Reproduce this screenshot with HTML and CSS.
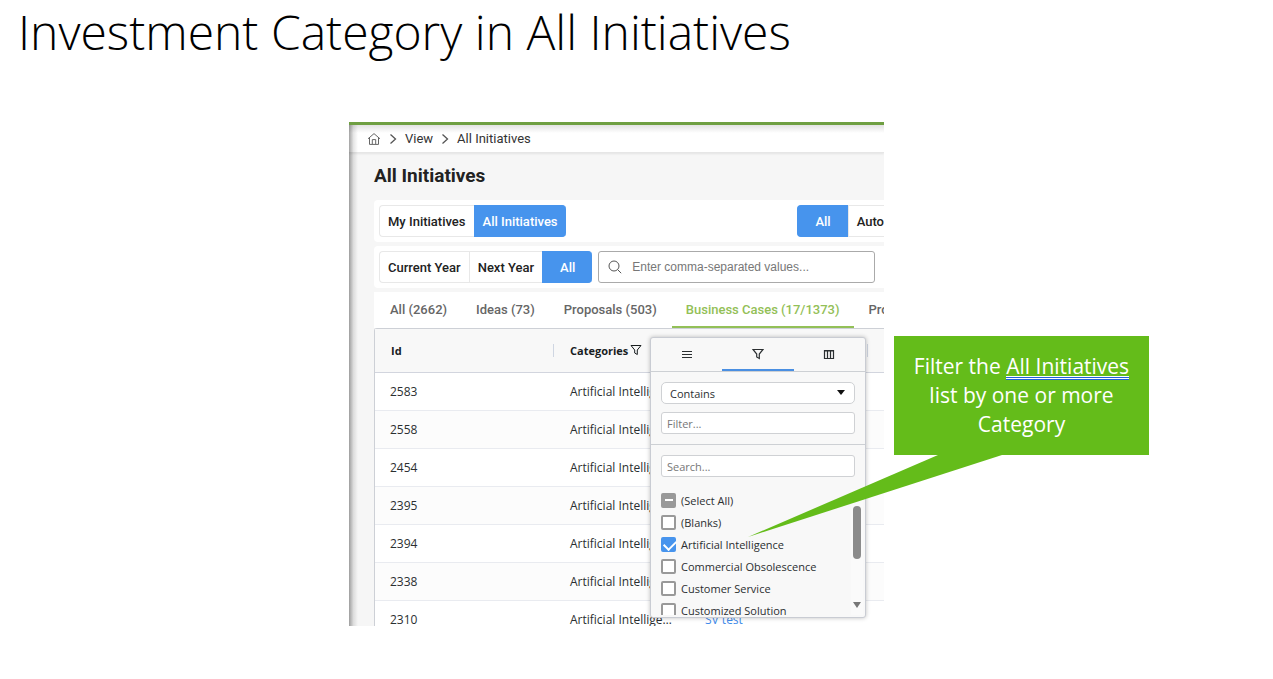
FILE: index.html
```html
<!DOCTYPE html>
<html lang="en">
<head>
<meta charset="utf-8">
<title>Investment Category in All Initiatives</title>
<link rel="stylesheet" href="styles.css">
</head>
<body>
<h1 class="slide-title">Investment Category in All Initiatives</h1>
<main class="slide">
  <section class="app">
    <nav class="crumbs" aria-label="Breadcrumb">
      <svg class="home" viewBox="0 0 14 14" aria-hidden="true"><path d="M1 6.8 7 1.6l6 5.2M2.5 6v6.4h9V6M5.3 12.2V7.6h3.4v4.6"/></svg>
      <svg class="chev" viewBox="0 0 8 12" aria-hidden="true"><path d="m1.5 1.5 5 4.5-5 4.5"/></svg>
      <a href="#">View</a>
      <svg class="chev" viewBox="0 0 8 12" aria-hidden="true"><path d="m1.5 1.5 5 4.5-5 4.5"/></svg>
      <a href="#">All Initiatives</a>
    </nav>
    <div class="content">
      <h2 class="heading">All Initiatives</h2>
      <div class="toolbar spread">
        <div class="group">
          <button class="btn">My Initiatives</button><button class="btn on">All Initiatives</button>
        </div>
        <div class="group modes">
          <button class="btn on">All</button><button class="btn">Auto</button>
        </div>
      </div>
      <div class="toolbar">
        <div class="group">
          <button class="btn">Current Year</button><button class="btn">Next Year</button><button class="btn on all">All</button>
        </div>
        <label class="search">
          <svg viewBox="0 0 14 14" aria-hidden="true"><circle cx="6" cy="6" r="5"/><path d="m9.6 9.6 3.6 3.6"/></svg>
          <input type="text" aria-label="Search values" placeholder="Enter comma-separated values...">
        </label>
      </div>
      <div class="tabs">
        <button class="tab">All (2662)</button>
        <button class="tab">Ideas (73)</button>
        <button class="tab">Proposals (503)</button>
        <button class="tab current">Business Cases (17/1373)</button>
        <button class="tab">Pro</button>
      </div>
      <div class="grid">
        <table>
          <colgroup><col class="c-id"><col class="c-cat"><col class="c-name"><col class="c-rest"></colgroup>
          <thead>
            <tr><th class="sep">Id</th><th class="cat">Categories<svg class="funnel" viewBox="0 0 12 12" aria-hidden="true"><path d="M1 1.5h10L7.3 6v4.5L4.7 9V6z"/></svg></th><th class="sep"></th><th></th></tr>
          </thead>
          <tbody>
            <tr><td>2583</td><td>Artificial Intelligence</td><td></td><td></td></tr>
            <tr><td>2558</td><td>Artificial Intelligence</td><td></td><td></td></tr>
            <tr><td>2454</td><td>Artificial Intelligence</td><td></td><td></td></tr>
            <tr><td>2395</td><td>Artificial Intelligence</td><td></td><td></td></tr>
            <tr><td>2394</td><td>Artificial Intelligence</td><td></td><td></td></tr>
            <tr><td>2338</td><td>Artificial Intelligence</td><td></td><td></td></tr>
            <tr><td>2310</td><td>Artificial Intelligence</td><td><a href="#">SV test</a></td><td></td></tr>
          </tbody>
        </table>
        <div class="popup">
          <div class="ptabs">
            <button class="ptab" aria-label="Menu"><svg viewBox="0 0 12 12"><path d="M1 3.5h10M1 6.5h10M1 9.5h10"/></svg></button>
            <button class="ptab current" aria-label="Filter"><svg viewBox="0 0 12 12"><path d="M1 1.5h10L7.3 6v4.5L4.7 9V6z"/></svg></button>
            <button class="ptab" aria-label="Columns"><svg viewBox="0 0 12 12"><path d="M1.5 2.5h9v8h-9zM4.5 2.5v8M7.5 2.5v8M1 3h10"/></svg></button>
          </div>
          <div class="fields">
            <div class="pick">
              <select aria-label="Condition"><option>Contains</option></select>
              <svg viewBox="0 0 8 5" aria-hidden="true"><path d="M0 0h8L4 5z"/></svg>
            </div>
            <input class="field" type="text" aria-label="Filter" placeholder="Filter...">
          </div>
          <div class="values">
            <input class="field" type="text" aria-label="Search" placeholder="Search...">
            <div class="scroller">
              <div class="list">
                <label><input type="checkbox" class="some">(Select All)</label>
                <label><input type="checkbox">(Blanks)</label>
                <label><input type="checkbox" checked>Artificial Intelligence</label>
                <label><input type="checkbox">Commercial Obsolescence</label>
                <label><input type="checkbox">Customer Service</label>
                <label><input type="checkbox">Customized Solution</label>
              </div>
              <div class="bar"><span class="thumb"></span><svg viewBox="0 0 8 6" aria-hidden="true"><path d="M0 0h8L4 6z"/></svg></div>
            </div>
          </div>
        </div>
      </div>
    </div>
  </section>
  <aside class="callout">
    <p>Filter the <span class="marked">All Initiatives</span> list by one or more Category</p>
    <svg class="pointer" viewBox="0 0 254 83" aria-hidden="true"><path d="M190 0h64L0 82z"/></svg>
  </aside>
</main>
</body>
</html>
```
FILE: styles.css
```css
* { box-sizing: border-box; }
body { margin: 0; background: #fff; color: #000; font-family: "Open Sans", "Noto Sans", sans-serif; overflow-x: hidden; }
button, input, select { font: inherit; color: inherit; }
button { border: 0; background: none; padding: 0; }
a { color: inherit; text-decoration: none; }
svg { display: block; fill: none; stroke: currentColor; flex: none; }

.slide-title { margin: 0; padding: 0 18px; font-size: 48px; line-height: 64px; font-weight: 300; white-space: nowrap; }
.slide { display: grid; grid-template-columns: 349fr 535fr 389fr; align-items: start; padding-top: 58px; }

.app { grid-column: 2; min-width: 0; position: relative; overflow: hidden; background: #f6f6f6; border-top: 3px solid #6f9f42; font-family: Roboto, sans-serif; font-size: 13px; color: #222; }
.app::after { content: ""; position: absolute; inset: 0 auto 0 0; width: 9px; background: linear-gradient(90deg, rgba(0,0,0,.36), rgba(0,0,0,.1) 50%, transparent); }
.crumbs { display: flex; align-items: center; height: 28px; padding: 0 18px; background: linear-gradient(#e2e2e2, #fff 8px); border-bottom: 1px solid #e6e6e6; box-shadow: 0 1px 2px rgba(0,0,0,.08); color: #333; }
.home { width: 14px; height: 14px; margin-right: 8px; color: #666; }
.chev { width: 8px; height: 12px; margin-right: 8px; stroke-width: 1.3; color: #555; }
.crumbs a { margin-right: 8px; }
.content { padding-left: 25px; }
.heading { margin: 0; padding: 11px 0 12px; font-size: 19px; line-height: 24px; font-weight: 700; }

.toolbar { display: flex; gap: 6px; margin-bottom: 4px; padding: 5px 9px 5px 5px; background: #fff; border-radius: 4px 0 0 4px; }
.spread { justify-content: space-between; padding-right: 0; }
.group { display: flex; flex: none; }
.btn { height: 32px; padding: 0 8px; border: 1px solid #e8e8e8; border-right-width: 0; background: #fff; font-weight: 500; white-space: nowrap; }
.btn:first-child { border-radius: 4px 0 0 4px; }
.btn:last-child { border-radius: 0 4px 4px 0; }
.btn.on { background: #4794ed; border-color: #4794ed; color: #fff; }
.all, .modes .on { padding: 0 17px; }
.modes .btn:last-child { padding-right: 0; border-radius: 0; }
.search { display: flex; flex: 1; align-items: center; gap: 10px; min-width: 0; padding: 0 9px; border: 1px solid #aaa; border-radius: 3px; }
.search svg { width: 14px; height: 14px; color: #555; }
.search input { flex: 1; min-width: 0; padding: 0; border: 0; outline: 0; background: none; font-family: "Liberation Sans", sans-serif; font-size: 12px; }
input::placeholder { color: #777; opacity: 1; }

.tabs { display: flex; gap: 1px; padding-left: 2px; background: #fff; }
.tab { flex: none; height: 36px; padding: 0 14px; border-bottom: 2px solid transparent; font-weight: 500; color: #666; white-space: nowrap; }
.tab.current { color: #93c057; border-color: #93c057; }

.grid { position: relative; margin-bottom: -14px; border: 1px solid #cdd0d6; border-right: 0; border-radius: 3px 0 0; background: #fff; font-family: "Open Sans", "Noto Sans", sans-serif; font-size: 12px; }
table { width: 100%; table-layout: fixed; border-collapse: separate; border-spacing: 0; }
.c-id { width: 179px; }
.c-cat { width: 135px; }
.c-name { width: 179px; }
th { position: relative; height: 44px; padding: 0 16px; background: #f8f8f8; border-bottom: 1px solid #d2d5de; text-align: left; font-size: 11px; font-weight: 700; color: #181d1f; white-space: nowrap; }
.sep::after { content: ""; position: absolute; right: 0; top: 15px; width: 1px; height: 13px; background: #cfd6e2; }
.funnel { display: inline-block; width: 12px; height: 12px; margin-left: 2px; vertical-align: -1px; }
td { height: 38px; padding: 0 16px 1px 15px; border-bottom: 1px solid #e9ebf0; overflow: hidden; text-overflow: ellipsis; white-space: nowrap; color: #2b2f31; }
td + td { padding-left: 16px; }
tr:nth-child(even) td { background: #fcfcfc; }
td a { color: #3f8bea; }

.popup { position: absolute; left: 275px; top: 8px; width: 216px; border: 1px solid #c9ccd3; border-radius: 3px; background: #f8f8f8; box-shadow: 0 0 4px rgba(0,0,0,.25); font-size: 11px; color: #2b2f31; }
.ptabs { display: flex; border-bottom: 1px solid #cdd0d4; }
.ptab { flex: 1; display: flex; justify-content: center; align-items: center; height: 33px; border-bottom: 2px solid transparent; }
.ptab.current { border-color: #4a8fe2; }
.ptab svg { width: 12px; height: 12px; stroke-width: 1.2; }
.fields { display: grid; gap: 8px; padding: 10px; border-bottom: 1px solid #cdd0d4; }
.pick { position: relative; }
.pick select, .field { display: block; width: 100%; height: 22px; padding: 0 5px; border: 1px solid #cfd1d4; border-radius: 3px; background: #fff; outline: 0; }
.pick select { appearance: none; padding: 0 8px; border-radius: 5px; }
.pick svg { position: absolute; right: 10px; top: 8px; width: 8px; height: 5px; fill: #111; stroke: none; }
.values { padding: 10px 2px 2px 10px; }
.values .field { width: calc(100% - 8px); }
.scroller { display: flex; height: 126px; margin-top: 12px; overflow: hidden; }
.list { flex: 1; }
.list label { display: flex; align-items: center; gap: 5px; height: 22px; white-space: nowrap; }
.list input { appearance: none; flex: none; width: 15px; height: 15px; margin: 0; border: 2px solid #999; border-radius: 2px; background: #fff; }
.list input.some { border-color: #999; background: linear-gradient(#fff, #fff) center / 8px 2px no-repeat #999; }
.list input:checked { position: relative; border-color: #4794ed; background: #4794ed; }
.list input:checked::after { content: ""; position: absolute; left: 1px; top: 1px; width: 10px; height: 6px; border: solid #fff; border-width: 0 0 2px 2px; transform: rotate(-45deg); }
.bar { display: flex; flex-direction: column; justify-content: space-between; align-items: center; width: 12px; padding: 17px 0 7px; background: #fafafa; }
.thumb { width: 8px; height: 53px; border-radius: 4px; background: #8b8b8b; }
.bar svg { width: 8px; height: 6px; fill: #777; stroke: none; }

.callout { position: relative; width: 255px; margin: 214px 0 0 10px; padding: 16px 14px; background: #64bc1a; color: #fff; text-align: center; font-size: 21px; line-height: 29px; }
.callout p { margin: 0; }
.marked { background: linear-gradient(#fff 1px, #1f62d8 1px 2px, #fff 2px 3px, #1f62d8 3px) 0 24px / 100% 4px no-repeat; }
.pointer { position: absolute; left: -146px; top: 100%; width: 254px; height: 83px; fill: #64bc1a; stroke: none; }
```
